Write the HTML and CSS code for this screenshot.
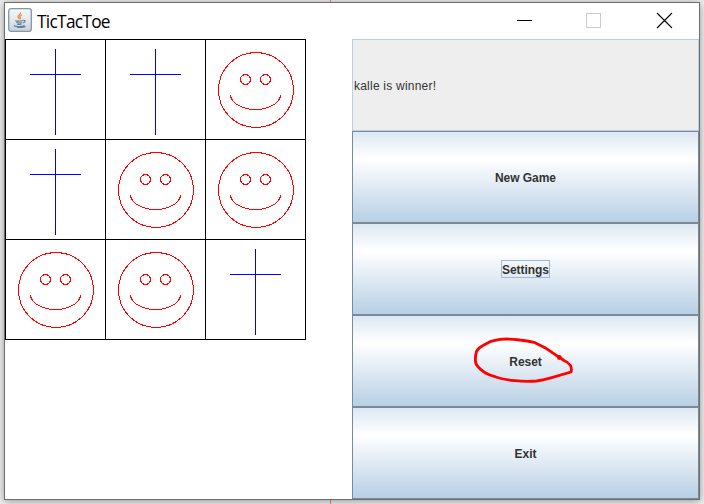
FILE: index.html
```
<!DOCTYPE html>
<html lang="en">
<head>
<meta charset="utf-8">
<title>TicTacToe</title>
<link rel="stylesheet" href="styles.css">
</head>
<body>
<svg class="defs" width="0" height="0">
  <symbol id="cross" viewBox="0 0 100 100">
    <path d="M50.5 10V96M25 35.5H76" fill="none" stroke="#00f" shape-rendering="crispEdges"/>
  </symbol>
  <symbol id="face" viewBox="0 0 100 100">
    <g fill="none" stroke="#f00" shape-rendering="crispEdges">
      <circle cx="51" cy="51" r="37.5"/>
      <circle cx="40.5" cy="40.5" r="5"/>
      <circle cx="60.5" cy="40.5" r="5"/>
      <path d="M25.5 55.5A25 15 0 0 0 75.5 55.5"/>
    </g>
  </symbol>
</svg>
<div class="window">
  <header class="titlebar">
    <svg class="app-icon" viewBox="0 0 24 24">
      <defs><linearGradient id="tile" x1="0" y1="0" x2="0" y2="1"><stop offset="0" stop-color="#f4f6f7"/><stop offset=".5" stop-color="#e6e9eb"/><stop offset="1" stop-color="#c9cfd5"/></linearGradient></defs>
      <rect x=".7" y=".7" width="22.6" height="22.6" rx="2.2" fill="url(#tile)" stroke="#8097ad" stroke-width="1.3"/>
      <path d="M12.4 4.5c1 2-3 3-2.4 4.6.3.8 1 1.3 1.5 2M14 7c-2 .9-2.5 1.5-1.7 2.5.4.6.2 1.1-.3 1.6" fill="none" stroke="#ee8a3c" stroke-width="1.3"/>
      <path d="M7.5 12.4c-.6 1 5.5 1 7.5.1M8.3 14.3c1.4.7 4.3.7 5.8.1M9 16c1.2.6 3.2.6 4.4.1M15.3 12.4c2.7-.5 2.1 2-.4 2.6M6.6 17.2c-2 1.5 7.5 2 10 .3M9 19.3c3 .3 6.5.1 8.5-.8" fill="none" stroke="#557f9f" stroke-width="1.1"/>
    </svg>
    <h1 class="title">TicTacToe</h1>
    <svg class="controls" viewBox="0 0 174 36" shape-rendering="crispEdges">
      <path d="M-8 17.5H7" fill="none" stroke="#000"/>
      <rect x="61.5" y="10.5" width="14" height="14" fill="none" stroke="#ccc"/>
      <path d="M132 10L147 25M147 10L132 25" fill="none" stroke="#000" stroke-width="1.1" shape-rendering="auto"/>
    </svg>
  </header>
  <main class="content">
    <div class="board">
      <svg class="cell"><use href="#cross"/></svg>
      <svg class="cell"><use href="#cross"/></svg>
      <svg class="cell"><use href="#face"/></svg>
      <svg class="cell"><use href="#cross"/></svg>
      <svg class="cell"><use href="#face"/></svg>
      <svg class="cell"><use href="#face"/></svg>
      <svg class="cell"><use href="#face"/></svg>
      <svg class="cell"><use href="#face"/></svg>
      <svg class="cell"><use href="#cross"/></svg>
    </div>
    <div class="panel">
      <div class="status"><span>kalle is winner!</span></div>
      <button class="action"><span class="label">New Game</span></button>
      <button class="action"><span class="label focused">Settings</span></button>
      <button class="action">
        <span class="label">Reset</span>
        <svg class="scribble" viewBox="0 0 110 60"><path d="M94.3 29.3L80 19.7L70 14.7Q62 12.5 55 12Q45 10.5 35 11.3Q30 12 25 13.7L18 17.5Q13 20 11.5 23.5Q10 28 10.5 34Q11 38 18.5 43.7Q22 46.5 30 48.7Q38 51.5 50 52.7Q60 53.7 71.7 53Q79 52 86.7 49.7L106 44Q107 41 105.5 37.5Q103 34 99 32.5L93.5 28.5" fill="none" stroke="#f00" stroke-width="2.8" stroke-linecap="round" stroke-linejoin="round"/><circle cx="94.3" cy="29.5" r="2.4" fill="#f00"/></svg>
      </button>
      <button class="action"><span class="label">Exit</span></button>
    </div>
  </main>
</div>
</body>
</html>
```
FILE: styles.css
```
* { box-sizing: border-box; }

body {
  margin: 0;
  height: 504px;
  padding: 2px 4px;
  overflow: hidden;
  background: linear-gradient(90deg, transparent 330px, #f08080 330px, #f08080 331px, transparent 331px), #f0f0f0;
  font-family: "Liberation Sans", Arial, sans-serif;
}

.defs { position: absolute; }

.window {
  width: 696px;
  height: 498px;
  border: 1px solid #6e6e6e;
  background: #fff;
  box-shadow: 0 1px 8px rgba(0, 0, 0, .4);
}

.titlebar {
  display: flex;
  height: 36px;
  padding-left: 3px;
}

.app-icon {
  width: 24px;
  height: 24px;
  margin-top: 5px;
}

.title {
  margin: 1px 0 0 5px;
  font: 17.3px/36px "Open Sans", "Noto Sans", sans-serif;
  letter-spacing: -0.7px;
  color: #000;
}

.controls {
  width: 174px;
  height: 36px;
  margin-left: auto;
  overflow: visible;
}

.content {
  display: flex;
  justify-content: space-between;
  height: 460px;
}

.board {
  display: grid;
  grid-template-columns: repeat(3, 100px);
  grid-template-rows: repeat(3, 100px);
  width: 301px;
  height: 301px;
  border-right: 1px solid #000;
  border-bottom: 1px solid #000;
}

.cell {
  width: 100px;
  height: 100px;
  background:
    linear-gradient(#000, #000) 0 0 / 100px 1px no-repeat,
    linear-gradient(#000, #000) 0 0 / 1px 100px no-repeat;
}

.panel {
  display: grid;
  grid-template-rows: repeat(5, 92px);
  width: 347px;
}

.status {
  display: flex;
  align-items: center;
  padding: 2px 0 0 1px;
  border: 1px solid #b8cfe5;
  background: #eee;
  color: #333;
  font-size: 12px;
  letter-spacing: 0.22px;
}

.action {
  position: relative;
  display: flex;
  align-items: center;
  justify-content: center;
  margin: 0;
  padding: 0;
  border: 1px solid #7a8a99;
  background: linear-gradient(#dde8f3 0%, #fff 30%, #b8cfe5 100%);
  color: #333;
  font: bold 12px/16px "Liberation Sans", Arial, sans-serif;
}

.label {
  padding: 2px 0 0;
  border: 1px solid transparent;
  line-height: 14px;
  letter-spacing: -0.04px;
}

.focused { border-color: #a3b8cc; }

.scribble {
  position: absolute;
  left: 112px;
  top: 12px;
  width: 110px;
  height: 60px;
}
```
